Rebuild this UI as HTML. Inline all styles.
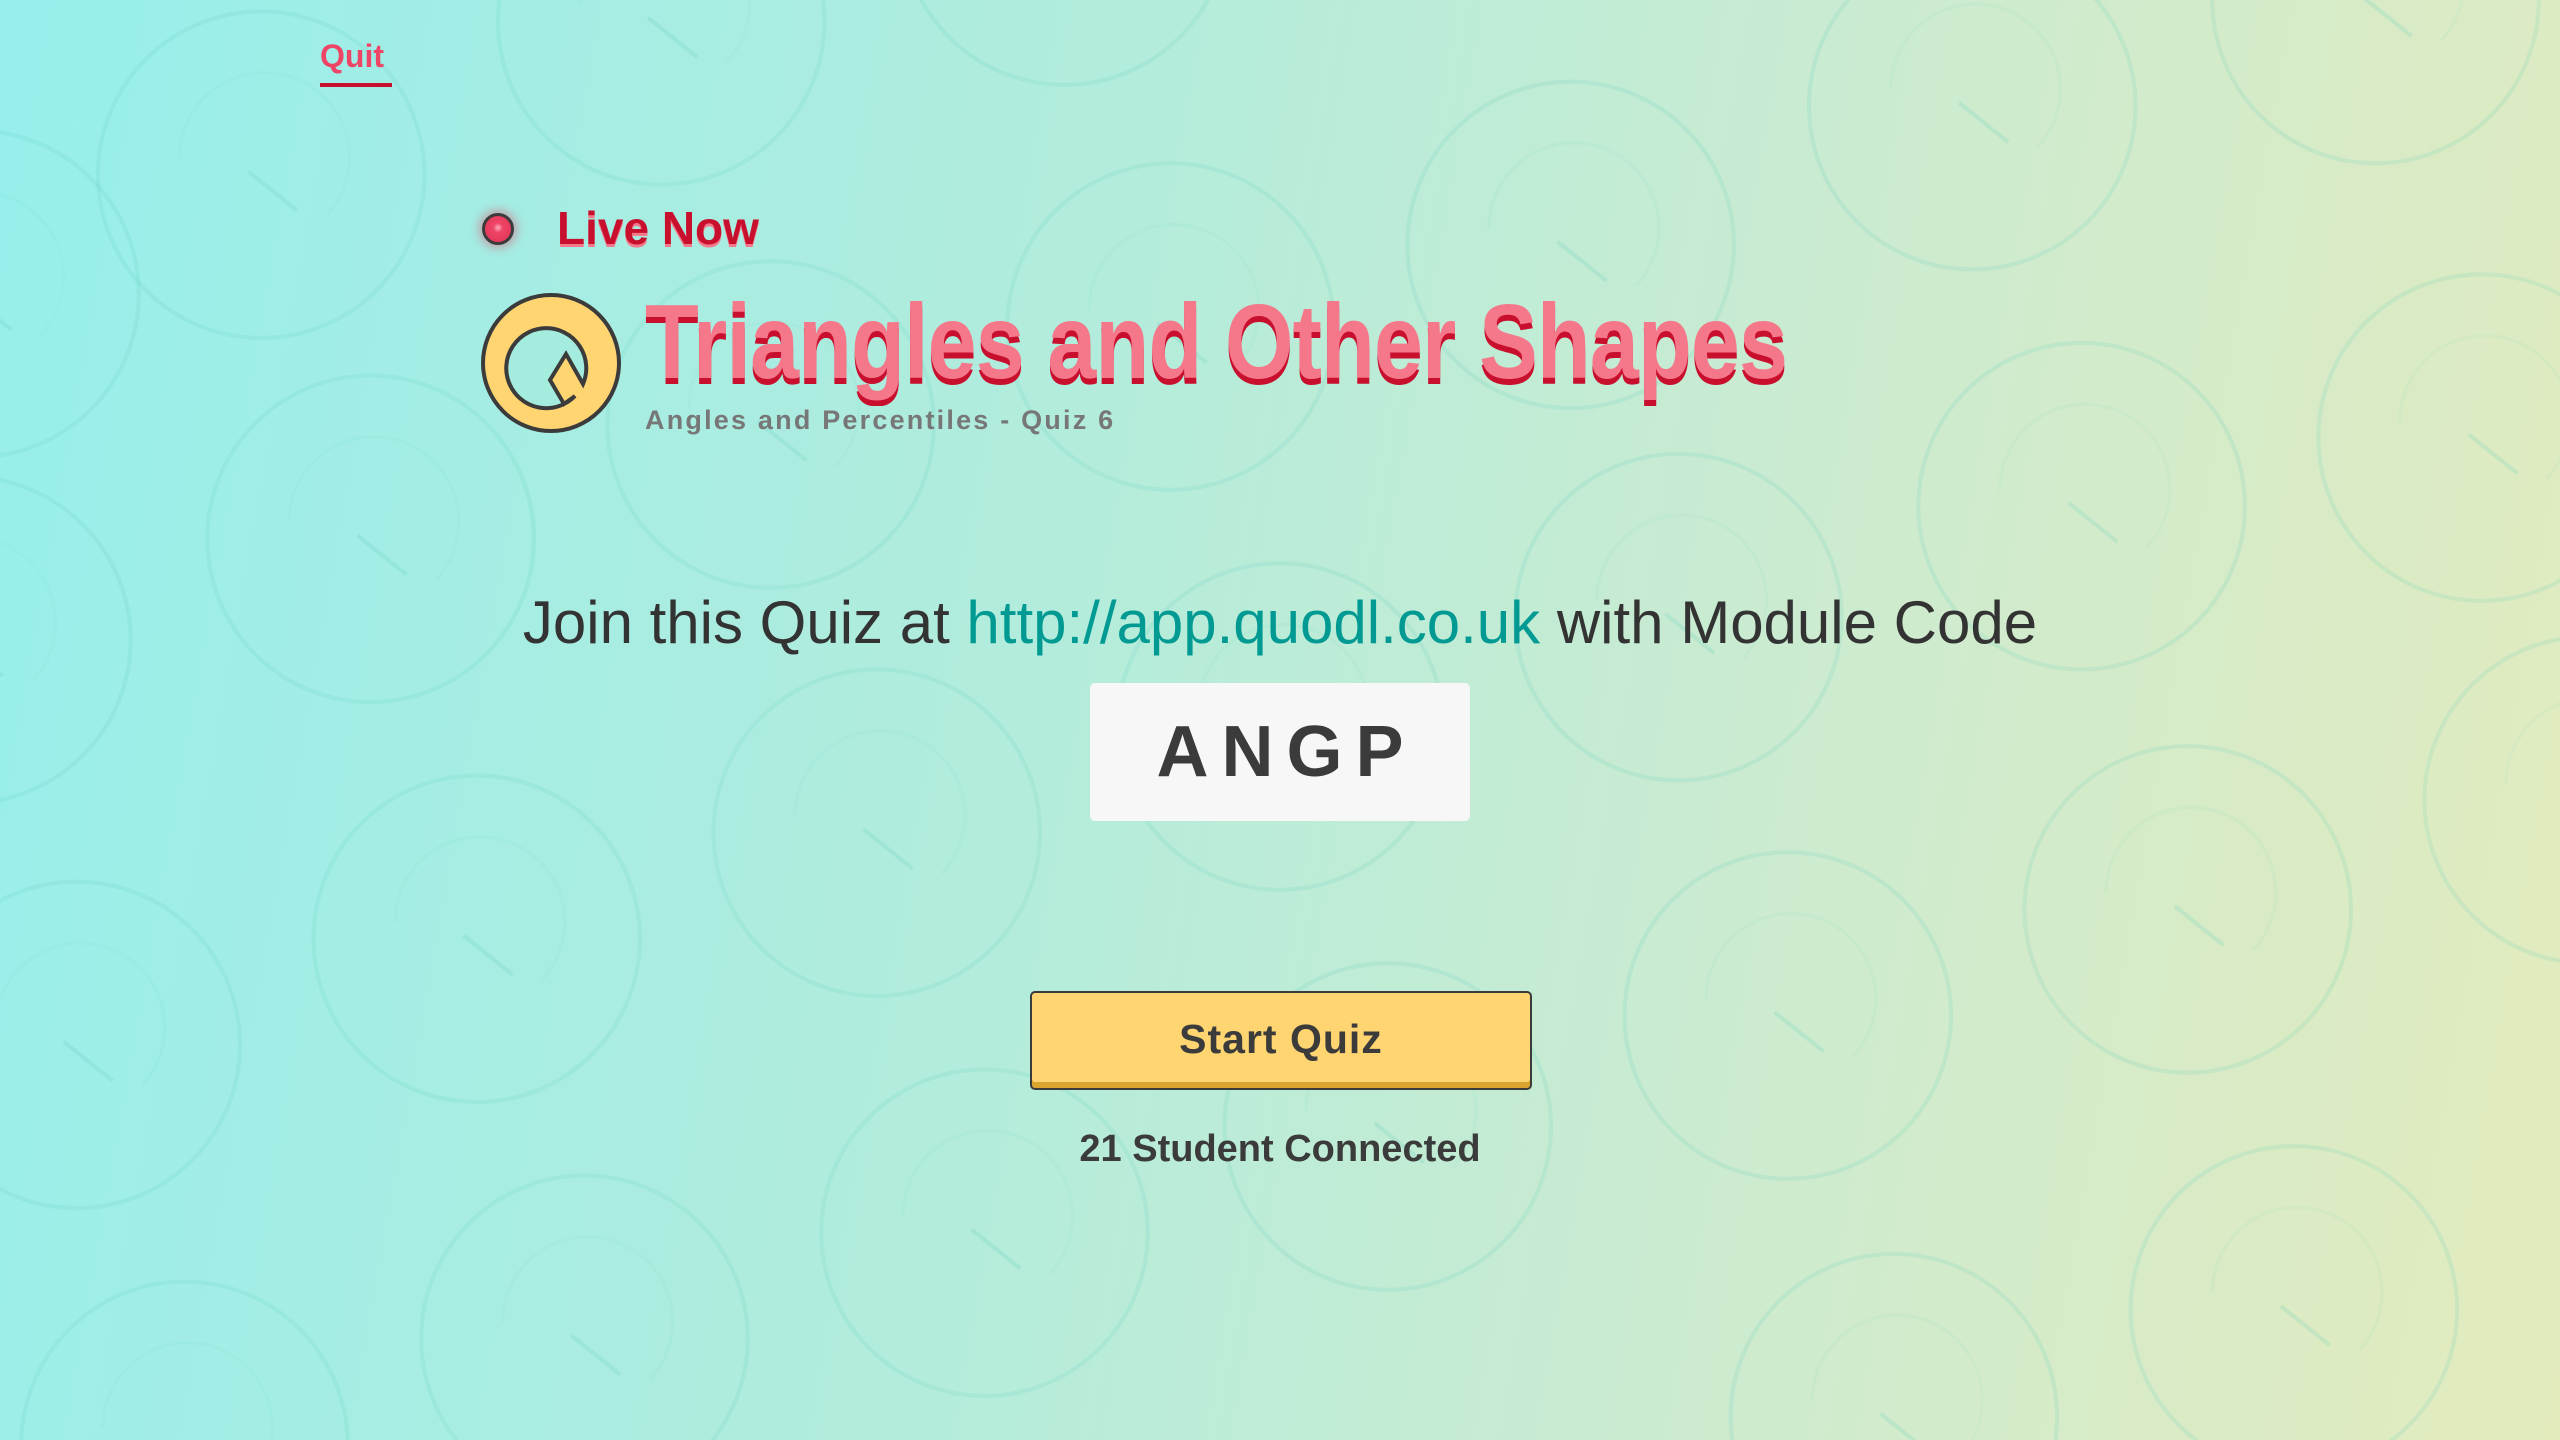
<!DOCTYPE html>
<html><head><meta charset="utf-8"><style>
*{margin:0;padding:0;box-sizing:border-box}
html,body{width:2560px;height:1440px;overflow:hidden}
body{position:relative;font-family:"Liberation Sans",sans-serif;background:linear-gradient(100deg,#97eeec 0%,#b2ecdc 40%,#cdebcf 70%,#e3ebbd 100%)}
svg.bg{position:absolute;left:0;top:0}
.abs{position:absolute;white-space:nowrap}
</style></head><body>
<svg class="bg" width="2560" height="1440" viewBox="0 0 1568 882">
<defs><g id="q"><circle r="100" fill="none" stroke="#5fcfb8" stroke-opacity="0.16" stroke-width="2.5"/><path d="M-50 -10 A52 52 0 1 1 40 25" fill="none" stroke="#5fcfb8" stroke-opacity="0.07" stroke-width="2"/><line x1="-8" y1="-2" x2="22" y2="22" stroke="#5fcfb8" stroke-opacity="0.2" stroke-width="2.5"/></g></defs>
<use href="#q" x="160" y="107"/><use href="#q" x="405" y="13"/><use href="#q" x="652" y="-48"/><use href="#q" x="962" y="150"/><use href="#q" x="1208" y="65"/><use href="#q" x="1455" y="0"/>
<use href="#q" x="-15" y="180"/><use href="#q" x="227" y="330"/><use href="#q" x="472" y="260"/><use href="#q" x="717" y="200"/><use href="#q" x="1028" y="378"/><use href="#q" x="1275" y="310"/><use href="#q" x="1520" y="268"/>
<use href="#q" x="-20" y="392"/><use href="#q" x="292" y="575"/><use href="#q" x="537" y="510"/><use href="#q" x="784" y="445"/><use href="#q" x="1095" y="622"/><use href="#q" x="1340" y="557"/><use href="#q" x="1585" y="490"/>
<use href="#q" x="47" y="640"/><use href="#q" x="358" y="820"/><use href="#q" x="603" y="755"/><use href="#q" x="850" y="690"/><use href="#q" x="1160" y="868"/><use href="#q" x="1405" y="802"/><use href="#q" x="113" y="885"/>
</svg>

<div class="abs" style="left:320px;top:38px;font-size:32px;font-weight:bold;color:#ee4466">Quit</div>
<div class="abs" style="left:320px;top:83px;width:72px;height:4px;background:#c8102e"></div>

<div class="abs" style="left:482px;top:213px;width:32px;height:32px;border-radius:50%;background:radial-gradient(circle at 50% 45%,#ffb0bd 0,#ee4466 25%,#e63a5b 70%);border:3px solid #3b3b3b;box-shadow:0 0 10px 3px rgba(230,60,90,0.45)"></div>
<div class="abs" style="left:557px;top:201px;font-size:46px;font-weight:bold;color:#c8102e;text-shadow:0 3px 0 #f4788a">Live Now</div>

<svg class="abs" style="left:480px;top:292px" width="142" height="142" viewBox="0 0 142 142">
<circle cx="71" cy="71" r="68" fill="#ffd571" stroke="#3b3b3b" stroke-width="4"/>
<path d="M95 104 A40 40 0 1 1 103 92 L86 62 L70 88 L84 112 Z" fill="#a3ecde" stroke="#3b3b3b" stroke-width="4"/>
</svg>

<div class="abs" style="left:645px;top:282px;font-size:106px;font-weight:bold;color:#f4788a;text-shadow:0 6px 0 #c8102e;transform:scaleX(0.83);transform-origin:left top;letter-spacing:-1px">Triangles and Other Shapes</div>
<div class="abs" style="left:645px;top:405px;font-size:27px;font-weight:bold;color:#777;letter-spacing:2.2px">Angles and Percentiles - Quiz 6</div>

<div class="abs" style="left:0;width:2560px;text-align:center;top:588px;font-size:60px;color:#333">Join this Quiz at <span style="color:#009a93">http://app.quodl.co.uk</span> with Module Code</div>

<div class="abs" style="left:1090px;top:683px;width:380px;height:138px;background:#f7f7f7;border-radius:5px;text-align:center;line-height:138px;font-size:72px;font-weight:bold;color:#3b3b3b;letter-spacing:13px;text-indent:13px">ANGP</div>

<div class="abs" style="left:1030px;top:991px;width:502px;height:99px;background:#ffd571;border:2px solid #3b3b3b;border-radius:5px;box-shadow:inset 0 -6px 0 #d9a52e;text-align:center;line-height:92px;font-size:41px;font-weight:bold;color:#3b3b3b;letter-spacing:1px">Start Quiz</div>

<div class="abs" style="left:0;width:2560px;text-align:center;top:1128px;font-size:38px;font-weight:bold;color:#3b3b3b">21 Student Connected</div>
</body></html>
